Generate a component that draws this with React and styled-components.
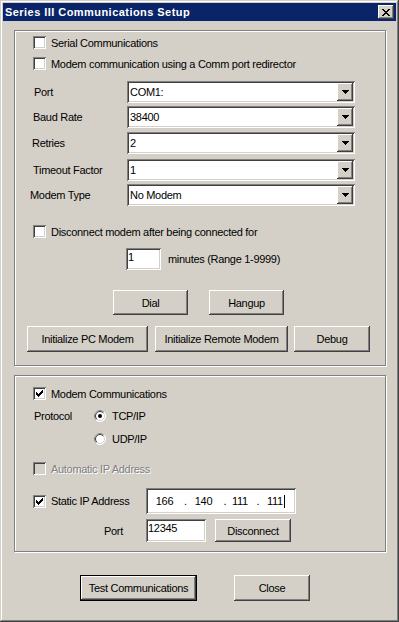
import React from "react";
import styled, { createGlobalStyle, css } from "styled-components";

const GlobalStyle = createGlobalStyle`
  html, body {
    margin: 0;
    padding: 0;
    background: #d4d0c8;
  }
  body {
    font-family: "Liberation Sans", Arial, sans-serif;
    font-size: 11px;
    letter-spacing: -0.3px;
    color: #000;
  }
`;

const raised = css`
  background: #d4d0c8;
  box-shadow: inset -1px -1px 0 #404040, inset 1px 1px 0 #ffffff,
    inset -2px -2px 0 #808080, inset 2px 2px 0 #d4d0c8;
`;

const sunken = css`
  box-shadow: inset 1px 1px 0 #808080, inset -1px -1px 0 #ffffff,
    inset 2px 2px 0 #404040, inset -2px -2px 0 #d4d0c8;
`;

const Window = styled.div`
  width: 399px;
  height: 622px;
  box-sizing: border-box;
  padding: 3px;
  background: #d4d0c8;
  box-shadow: inset -1px -1px 0 #404040, inset 1px 1px 0 #d4d0c8,
    inset -2px -2px 0 #808080, inset 2px 2px 0 #ffffff;
  display: flex;
  flex-direction: column;
`;

const TitleBar = styled.div`
  height: 18px;
  flex: none;
  background: #0a246a;
  display: flex;
  align-items: center;
  justify-content: space-between;
  padding: 0 2px;
`;

const TitleText = styled.span`
  color: #fff;
  font-weight: bold;
  font-size: 11px;
  letter-spacing: 0.45px;
`;

const CloseButton = styled.div`
  ${raised};
  width: 16px;
  height: 14px;
  display: flex;
  align-items: center;
  justify-content: center;
`;

const Body = styled.div`
  padding: 9px 10px 0 11px;
  display: flex;
  flex-direction: column;
  align-items: flex-start;
`;

const GroupBox = styled.div`
  width: 372px;
  box-sizing: border-box;
  margin-top: ${(p) => p.$mt || 0}px;
  border: 1px solid #808080;
  box-shadow: 1px 1px 0 #ffffff, inset 1px 1px 0 #ffffff;
  padding-bottom: ${(p) => p.$pb}px;
  display: flex;
  flex-direction: column;
`;

const Row = styled.div`
  display: flex;
  align-items: center;
  height: ${(p) => p.$h}px;
  margin-top: ${(p) => p.$mt}px;
  padding-left: ${(p) => p.$pl || 0}px;
`;

const Label = styled.span`
  box-sizing: border-box;
  width: ${(p) => p.$w}px;
  padding-left: ${(p) => p.$pl || 0}px;
  flex: none;
  white-space: nowrap;
`;

const CheckItem = styled.div`
  display: flex;
  align-items: center;
  width: ${(p) => (p.$w ? `${p.$w}px` : "auto")};
  flex: none;
`;

const CheckSquare = styled.div`
  ${sunken};
  width: 13px;
  height: 13px;
  flex: none;
  background: ${(p) => (p.$disabled ? "#d4d0c8" : "#ffffff")};
  display: flex;
  align-items: center;
  justify-content: center;
`;

const ItemText = styled.span`
  margin-left: ${(p) => p.$gap || 5}px;
  white-space: nowrap;
  color: ${(p) => (p.$disabled ? "#808080" : "#000")};
  text-shadow: ${(p) => (p.$disabled ? "1px 1px 0 #ffffff" : "none")};
`;

const ComboBox = styled.div`
  ${sunken};
  width: 228px;
  height: 22px;
  box-sizing: border-box;
  background: #fff;
  padding: 2px;
  display: flex;
  align-items: center;
`;

const ComboValue = styled.span`
  flex: 1;
  padding-left: 1px;
`;

const ArrowButton = styled.div`
  ${raised};
  width: 16px;
  height: 18px;
  display: flex;
  align-items: center;
  justify-content: center;
`;

const EditBox = styled.div`
  ${sunken};
  box-sizing: border-box;
  width: ${(p) => p.$w}px;
  height: ${(p) => p.$h}px;
  margin-left: ${(p) => p.$ml || 0}px;
  background: #fff;
  padding: ${(p) => (p.$center ? "0 2px" : "3px 2px 0")};
  display: flex;
  align-items: ${(p) => (p.$center ? "center" : "flex-start")};
  flex: none;
`;

const IpPart = styled.span`
  width: ${(p) => p.$w}px;
  flex: none;
  display: flex;
  justify-content: center;
`;

const Caret = styled.span`
  width: 1px;
  height: 13px;
  background: #000;
  margin-left: 3px;
`;

const Button = styled.div`
  ${raised};
  box-sizing: border-box;
  width: ${(p) => p.$w}px;
  height: ${(p) => p.$h || 25}px;
  margin-left: ${(p) => p.$ml || 0}px;
  flex: none;
  display: flex;
  align-items: center;
  justify-content: center;
  white-space: nowrap;
  ${(p) =>
    p.$default &&
    css`
      border: 1px solid #000;
    `}
`;

const RadioWrap = styled.div`
  display: flex;
  align-items: center;
  margin-left: ${(p) => p.$ml || 0}px;
`;

const CheckMark = () => (
  <svg width="7" height="7" viewBox="0 0 7 7" shapeRendering="crispEdges">
    <path
      d="M6 0h1v1h-1zM5 1h2v1h-2zM0 2h1v1h-1zM4 2h3v1h-3zM0 3h2v1h-2zM3 3h3v1h-3zM0 4h5v1h-5zM1 5h3v1h-3zM2 6h1v1h-1z"
      fill="#000"
    />
  </svg>
);

const CheckBox = ({ checked, disabled, w, children }) => (
  <CheckItem $w={w}>
    <CheckSquare $disabled={disabled}>{checked && <CheckMark />}</CheckSquare>
    <ItemText $disabled={disabled}>{children}</ItemText>
  </CheckItem>
);

const RadioDot = ({ checked }) => (
  <svg width="12" height="12" viewBox="0 0 12 12">
    <circle cx="6" cy="6" r="5.5" fill="#fff" stroke="#ffffff" />
    <path d="M2.1 9.9A5.5 5.5 0 0 1 9.9 2.1" fill="none" stroke="#808080" />
    <circle cx="6" cy="6" r="4.5" fill="none" stroke="#d4d0c8" />
    <path d="M2.8 9.2A4.5 4.5 0 0 1 9.2 2.8" fill="none" stroke="#404040" />
    {checked && <circle cx="6" cy="6" r="2" fill="#000" />}
  </svg>
);

const Radio = ({ checked, ml, children }) => (
  <RadioWrap $ml={ml}>
    <RadioDot checked={checked} />
    <ItemText $gap={6}>{children}</ItemText>
  </RadioWrap>
);

const DownArrow = () => (
  <svg width="7" height="4" viewBox="0 0 7 4" shapeRendering="crispEdges">
    <path d="M0 0h7v1h-7zM1 1h5v1h-5zM2 2h3v1h-3zM3 3h1v1h-1z" fill="#000" />
  </svg>
);

const Combo = ({ value }) => (
  <ComboBox>
    <ComboValue>{value}</ComboValue>
    <ArrowButton>
      <DownArrow />
    </ArrowButton>
  </ComboBox>
);

const CloseGlyph = () => (
  <svg width="8" height="7" viewBox="0 0 8 7" shapeRendering="crispEdges">
    <path
      d="M0 0h2v1h-2zM6 0h2v1h-2zM1 1h2v1h-2zM5 1h2v1h-2zM2 2h4v1h-4zM3 3h2v1h-2zM2 4h4v1h-4zM1 5h2v1h-2zM5 5h2v1h-2zM0 6h2v1h-2zM6 6h2v1h-2z"
      fill="#000"
    />
  </svg>
);

const comboRows = [
  { label: "Port", value: "COM1:", mt: 11, pl: 19 },
  { label: "Baud Rate", value: "38400", mt: 3, pl: 18 },
  { label: "Retries", value: "2", mt: 4, pl: 17 },
  { label: "Timeout Factor", value: "1", mt: 5, pl: 18 },
  { label: "Modem Type", value: "No Modem", mt: 3, pl: 15 },
];

const ipParts = [
  { t: "166", w: 33 },
  { t: ".", w: 9 },
  { t: "140", w: 27 },
  { t: ".", w: 16 },
  { t: "111", w: 14 },
  { t: ".", w: 22 },
  { t: "111", w: 12 },
];

export default function App() {
  return (
    <>
      <GlobalStyle />
      <Window>
        <TitleBar>
          <TitleText>Series III Communications Setup</TitleText>
          <CloseButton>
            <CloseGlyph />
          </CloseButton>
        </TitleBar>
        <Body>
          <GroupBox $pb={13}>
            <Row $h={13} $mt={5} $pl={18}>
              <CheckBox>Serial Communications</CheckBox>
            </Row>
            <Row $h={13} $mt={8} $pl={18}>
              <CheckBox>Modem communication using a Comm port redirector</CheckBox>
            </Row>
            {comboRows.map((r) => (
              <Row key={r.label} $h={22} $mt={r.mt}>
                <Label $w={112} $pl={r.pl}>
                  {r.label}
                </Label>
                <Combo value={r.value} />
              </Row>
            ))}
            <Row $h={13} $mt={19} $pl={18}>
              <CheckBox>Disconnect modem after being connected for</CheckBox>
            </Row>
            <Row $h={22} $mt={10}>
              <EditBox $w={35} $h={22} $ml={111}>
                1
              </EditBox>
              <ItemText $gap={7}>minutes (Range 1-9999)</ItemText>
            </Row>
            <Row $h={25} $mt={20}>
              <Button $w={75} $ml={98}>
                Dial
              </Button>
              <Button $w={75} $ml={21}>
                Hangup
              </Button>
            </Row>
            <Row $h={26} $mt={11}>
              <Button $w={121} $h={26} $ml={12}>
                Initialize PC Modem
              </Button>
              <Button $w={133} $h={26} $ml={7}>
                Initialize Remote Modem
              </Button>
              <Button $w={76} $h={26} $ml={6}>
                Debug
              </Button>
            </Row>
          </GroupBox>

          <GroupBox $mt={9} $pb={9}>
            <Row $h={13} $mt={11} $pl={18}>
              <CheckBox checked>Modem Communications</CheckBox>
            </Row>
            <Row $h={12} $mt={10}>
              <Label $w={79} $pl={19}>
                Protocol
              </Label>
              <Radio checked>TCP/IP</Radio>
            </Row>
            <Row $h={12} $mt={11}>
              <Radio ml={79}>UDP/IP</Radio>
            </Row>
            <Row $h={13} $mt={17} $pl={18}>
              <CheckBox disabled>Automatic IP Address</CheckBox>
            </Row>
            <Row $h={26} $mt={13} $pl={18}>
              <CheckBox checked w={113}>
                Static IP Address
              </CheckBox>
              <EditBox $w={150} $h={26} $center>
                {ipParts.map((p, i) => (
                  <IpPart key={i} $w={p.w}>
                    {p.t}
                  </IpPart>
                ))}
                <Caret />
              </EditBox>
            </Row>
            <Row $h={23} $mt={5}>
              <Label $w={131} $pl={89}>
                Port
              </Label>
              <EditBox $w={60} $h={23}>
                12345
              </EditBox>
              <Button $w={76} $h={23} $ml={9}>
                Disconnect
              </Button>
            </Row>
          </GroupBox>

          <Row $h={26} $mt={23}>
            <Button $default $w={117} $h={26} $ml={66}>
              Test Communications
            </Button>
            <Button $w={76} $h={26} $ml={37}>
              Close
            </Button>
          </Row>
        </Body>
      </Window>
    </>
  );
}
